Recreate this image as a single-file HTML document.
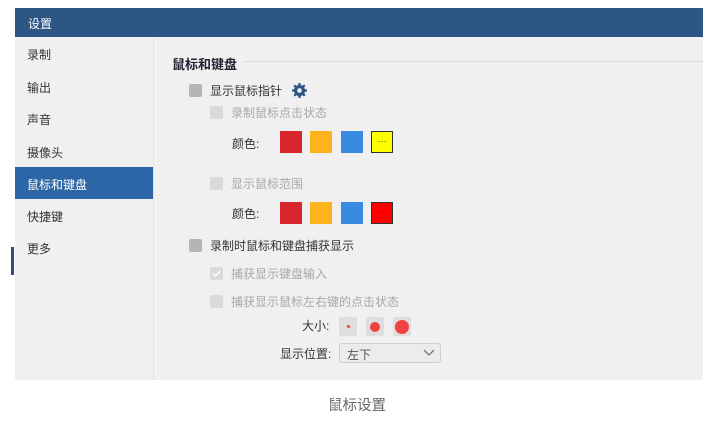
<!DOCTYPE html><html><head><meta charset="utf-8"><style>
body{margin:0;width:715px;height:433px;background:#fff;position:relative;overflow:hidden;font-family:"Liberation Sans","Noto Sans CJK SC",sans-serif;font-size:12px;color:#333}
.a{position:absolute}
.hd{left:15px;top:8px;width:688px;height:29px;background:#2c5684;color:#fff}
.bd{left:15px;top:37px;width:688px;height:343px;background:#f0f0f0}
.sb{left:15px;top:37px;width:138px;height:343px;background:#f0f0f0;border-right:1px solid #e2e2e2}
.it{left:27px;font-size:12px;color:#333}
.cb{width:13px;height:13px;border-radius:2px}
.m{background:#b5b5b5}.s{background:#dadada}
.t{color:#333}.g{color:#a8a8a8}
.sw{width:22px;height:22px}
.db{width:18px;height:19px;background:#dedede;border-radius:2px}
.dot{position:absolute;border-radius:50%;background:#f04040}
</style></head><body>
<div class="a hd"><span class="a" style="left:13px;top:7px">设置</span></div>
<div class="a bd"></div>
<div class="a sb"></div>
<div class="a" style="left:15px;top:167px;width:138px;height:32px;background:#2d66a6"></div>
<div class="a" style="left:11px;top:247px;width:3px;height:28px;background:#2c4f7a"></div>
<div class="a it" style="top:46px">录制</div>
<div class="a it" style="top:79px">输出</div>
<div class="a it" style="top:111px">声音</div>
<div class="a it" style="top:144px">摄像头</div>
<div class="a it" style="top:176px;color:#fff">鼠标和键盘</div>
<div class="a it" style="top:208px">快捷键</div>
<div class="a it" style="top:240px">更多</div>
<div class="a" style="left:172px;top:54px;font-size:13px;font-weight:bold;color:#223">鼠标和键盘</div>
<div class="a" style="left:243px;top:61px;width:460px;height:1px;background:#dcdcdc"></div>
<div class="a cb m" style="left:189px;top:84px"></div><div class="a t" style="left:210px;top:82px">显示鼠标指针</div>
<svg class="a" style="left:292px;top:83px" width="15" height="15" viewBox="0 0 16 16"><path fill="#2c5684" d="M7 0h2l.4 2.2 1.6.7 1.9-1.3 1.4 1.4-1.3 1.9.7 1.6L16 7v2l-2.2.4-.7 1.6 1.3 1.9-1.4 1.4-1.9-1.3-1.6.7L9 16H7l-.4-2.2-1.6-.7-1.9 1.3-1.4-1.4 1.3-1.9-.7-1.6L0 9V7l2.2-.4.7-1.6-1.3-1.9 1.4-1.4 1.9 1.3 1.6-.7z"/><circle cx="8" cy="8" r="2.5" fill="#f0f0f0"/></svg>
<div class="a cb s" style="left:210px;top:106px"></div><div class="a g" style="left:231px;top:104px">录制鼠标点击状态</div>
<div class="a t" style="left:232px;top:135px">颜色:</div>
<div class="a sw" style="left:280px;top:131px;background:#d9262c"></div>
<div class="a sw" style="left:310px;top:131px;background:#fcb31e"></div>
<div class="a sw" style="left:341px;top:131px;background:#3a8ae0"></div>
<div class="a sw" style="left:371px;top:131px;width:20px;height:20px;background:#ffff00;border:1px solid #333;font-size:9px;text-align:center;line-height:18px">···</div>
<div class="a cb s" style="left:210px;top:177px"></div><div class="a g" style="left:231px;top:175px">显示鼠标范围</div>
<div class="a t" style="left:232px;top:205px">颜色:</div>
<div class="a sw" style="left:280px;top:202px;background:#d9262c"></div>
<div class="a sw" style="left:310px;top:202px;background:#fcb31e"></div>
<div class="a sw" style="left:341px;top:202px;background:#3a8ae0"></div>
<div class="a sw" style="left:371px;top:202px;width:20px;height:20px;background:#ff0000;border:1px solid #333;font-size:9px;text-align:center;line-height:18px;color:#800">···</div>
<div class="a cb m" style="left:189px;top:239px"></div><div class="a t" style="left:210px;top:237px">录制时鼠标和键盘捕获显示</div>
<div class="a cb s" style="left:210px;top:267px"></div><svg class="a" style="left:211px;top:268px" width="11" height="11"><path d="M2 5.5l2.5 2.5 4.5-5" stroke="#fff" stroke-width="1.5" fill="none"/></svg><div class="a g" style="left:231px;top:265px">捕获显示键盘输入</div>
<div class="a cb s" style="left:210px;top:295px"></div><div class="a g" style="left:231px;top:293px">捕获显示鼠标左右键的点击状态</div>
<div class="a t" style="left:302px;top:317px">大小:</div>
<div class="a db" style="left:339px;top:317px"><div class="dot" style="left:8px;top:8px;width:3px;height:3px"></div></div>
<div class="a db" style="left:366px;top:317px"><div class="dot" style="left:4px;top:5px;width:10px;height:10px"></div></div>
<div class="a db" style="left:393px;top:317px"><div class="dot" style="left:2px;top:3px;width:14px;height:14px"></div></div>
<div class="a t" style="left:280px;top:345px">显示位置:</div>
<div class="a" style="left:339px;top:343px;width:100px;height:18px;border:1px solid #cfcfcf;border-radius:3px;background:#ececec"><span class="a" style="left:7px;top:2px;color:#555">左下</span><svg class="a" style="left:83px;top:5px" width="12" height="8"><path d="M1 1l5 5 5-5" stroke="#777" fill="none" stroke-width="1.3"/></svg></div>
<div class="a" style="left:328px;top:394px;font-size:14.5px;color:#666">鼠标设置</div>
</body></html>
